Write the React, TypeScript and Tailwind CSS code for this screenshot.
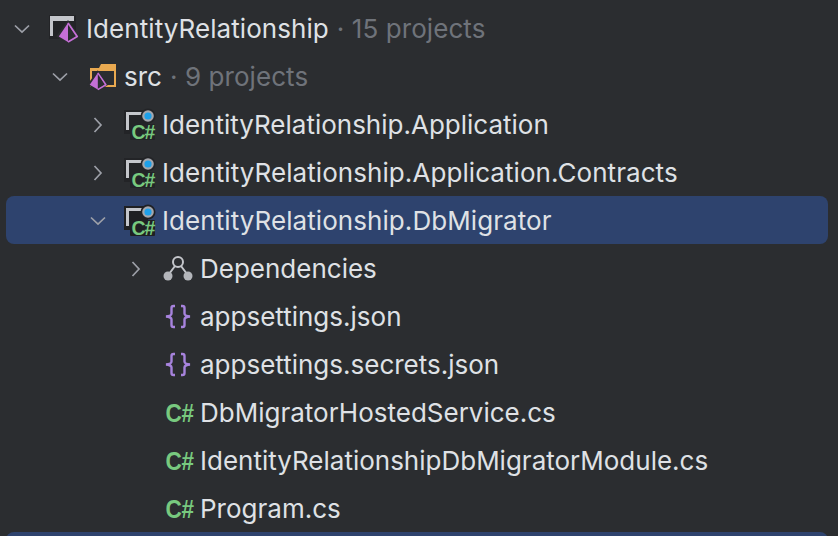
import React from "react";

const Chevron = ({ open }: { open: boolean }) => (
  <svg width="16" height="16" viewBox="0 0 16 16" fill="none" stroke="#9da0a8" strokeWidth="1.7" className="shrink-0">
    {open ? <path d="M1 4.5 8 11l7-6.5" /> : <path d="M4.5 1 11 8l-6.5 7" />}
  </svg>
);

const Pyramid = ({ x, y, s = 1 }: { x: number; y: number; s?: number }) => (
  <g transform={`translate(${x} ${y}) scale(${s})`}>
    <path d="M10 -2 22 14.5 10 22 -2 14.5Z" fill="#2b2d30" />
    <path d="M10 1 0.8 14.5 10 20Z" fill="#c56fd6" />
    <path d="M10 1 19.2 14.5 10 20" fill="none" stroke="#c56fd6" strokeWidth="1.8" strokeLinejoin="round" />
    <path d="M10.8 4 17 14.2 10.8 17.6Z" fill="#2b2d30" />
  </g>
);

const SolutionIcon = () => (
  <svg width="32" height="32" viewBox="0 1 32 32" className="shrink-0 overflow-visible">
    <path d="M1 3H28V27H1Z" fill="#232427" />
    <path d="M2 4H26V9H5V24H2Z" fill="#c4c6cb" />
    <Pyramid x={10} y={10} />
  </svg>
);

const FolderIcon = () => (
  <svg width="32" height="32" viewBox="0 1 32 32" className="shrink-0 overflow-visible">
    <path d="M4 8H13L15 4H30V27H4Z" fill="#e9a950" />
    <path d="M6 11H28V25H6Z" fill="#2b2d30" />
    <Pyramid x={3} y={12} s={0.88} />
  </svg>
);

const ProjectIcon = ({ selected }: { selected?: boolean }) => (
  <svg width="32" height="32" viewBox="0 1 32 32" className="shrink-0 overflow-visible">
    <path d="M0 2H24V26H0Z" fill={selected ? "#1f2023" : "#232427"} />
    <path d="M2 4H18V7H5V22H2Z" fill="#c4c6cb" />
    <circle cx="24" cy="8" r="7.5" fill={selected ? "#1f2023" : "#232427"} />
    <circle cx="24" cy="8" r="5.8" fill="#a4a7ad" />
    <circle cx="24" cy="8" r="3.6" fill="#1ea0ea" />
    <rect x="6" y="16" width="25" height="16" rx="1" fill={selected ? "#1f2023" : "#232427"} />
    <text
      x="7.5"
      y="30.5"
      fontFamily="'Liberation Sans', sans-serif"
      fontWeight="700"
      fontSize="19.5"
      letterSpacing="-1"
      fill="#78c97f"
    >
      C#
    </text>
  </svg>
);

const DependencyIcon = () => (
  <svg width="32" height="32" viewBox="0 1 32 32" className="shrink-0">
    <circle cx="16" cy="10" r="5" fill="none" stroke="#c4c6cb" strokeWidth="2" />
    <path d="M13 14 7 22M19 14 25 22" stroke="#c4c6cb" strokeWidth="2" fill="none" />
    <circle cx="6" cy="24" r="4.5" fill="#b4b6bb" />
    <circle cx="26" cy="24" r="4.5" fill="#b4b6bb" />
  </svg>
);

const Braces = () => (
  <svg width="32" height="32" viewBox="0 1 32 32" fill="none" stroke="#a783dd" strokeWidth="2.4" className="shrink-0">
    <path d="M13 6H11.5Q9.5 6 9.5 8V13.5Q9.5 16 4 16.5Q9.5 17 9.5 19.5V25Q9.5 27 11.5 27H13" />
    <path d="M19 6H20.5Q22.5 6 22.5 8V13.5Q22.5 16 28 16.5Q22.5 17 22.5 19.5V25Q22.5 27 20.5 27H19" />
  </svg>
);

const CSharp = () => (
  <span className="w-[32px] shrink-0 origin-left scale-x-[0.9] whitespace-nowrap pl-[4px] font-['Liberation_Sans',sans-serif] text-[25px] leading-none font-bold tracking-[-0.5px] text-[#78c97f]">
    C#
  </span>
);

const Row = ({
  pad,
  chevron,
  icon,
  name,
  hint,
  selected,
  wide,
}: {
  pad: string;
  chevron?: "open" | "closed";
  icon: React.ReactNode;
  name: string;
  hint?: string;
  selected?: boolean;
  wide?: boolean;
}) => (
  <div className={`ml-[6px] mr-[10px] flex h-12 shrink-0 items-center rounded-lg pt-[2px] ${pad} ${selected ? "bg-[#2e436e]" : ""}`}>
    <span className="flex w-[34px] shrink-0 items-center">
      {chevron && <Chevron open={chevron === "open"} />}
    </span>
    {icon}
    <span className={`ml-[6px] whitespace-nowrap text-[26px] leading-none text-[#dfe1e5] ${wide ? "tracking-[0.07px]" : ""}`}>{name}</span>
    {hint && <span className="ml-[8px] whitespace-nowrap text-[26px] leading-none tracking-[0.07px] text-[#6f737a]">· {hint}</span>}
  </div>
);

export default function App() {
  return (
    <div className="flex h-[536px] w-[838px] flex-col overflow-hidden bg-[#2b2d30] pt-1 font-['Inter',sans-serif]">
      <Row pad="pl-[8px]" chevron="open" icon={<SolutionIcon />} name="IdentityRelationship" hint="15 projects" wide />
      <Row pad="pl-[46px]" chevron="open" icon={<FolderIcon />} name="src" hint="9 projects" />
      <Row pad="pl-[84px]" chevron="closed" icon={<ProjectIcon />} name="IdentityRelationship.Application" />
      <Row pad="pl-[84px]" chevron="closed" icon={<ProjectIcon />} name="IdentityRelationship.Application.Contracts" wide />
      <Row pad="pl-[84px]" chevron="open" icon={<ProjectIcon selected />} name="IdentityRelationship.DbMigrator" selected wide />
      <Row pad="pl-[122px]" chevron="closed" icon={<DependencyIcon />} name="Dependencies" />
      <Row pad="pl-[122px]" icon={<Braces />} name="appsettings.json" />
      <Row pad="pl-[122px]" icon={<Braces />} name="appsettings.secrets.json" />
      <Row pad="pl-[122px]" icon={<CSharp />} name="DbMigratorHostedService.cs" />
      <Row pad="pl-[122px]" icon={<CSharp />} name="IdentityRelationshipDbMigratorModule.cs" />
      <Row pad="pl-[122px]" icon={<CSharp />} name="Program.cs" />
      <div className="ml-[6px] mr-[10px] h-12 shrink-0 rounded-lg bg-[#2e436e]" />
    </div>
  );
}
